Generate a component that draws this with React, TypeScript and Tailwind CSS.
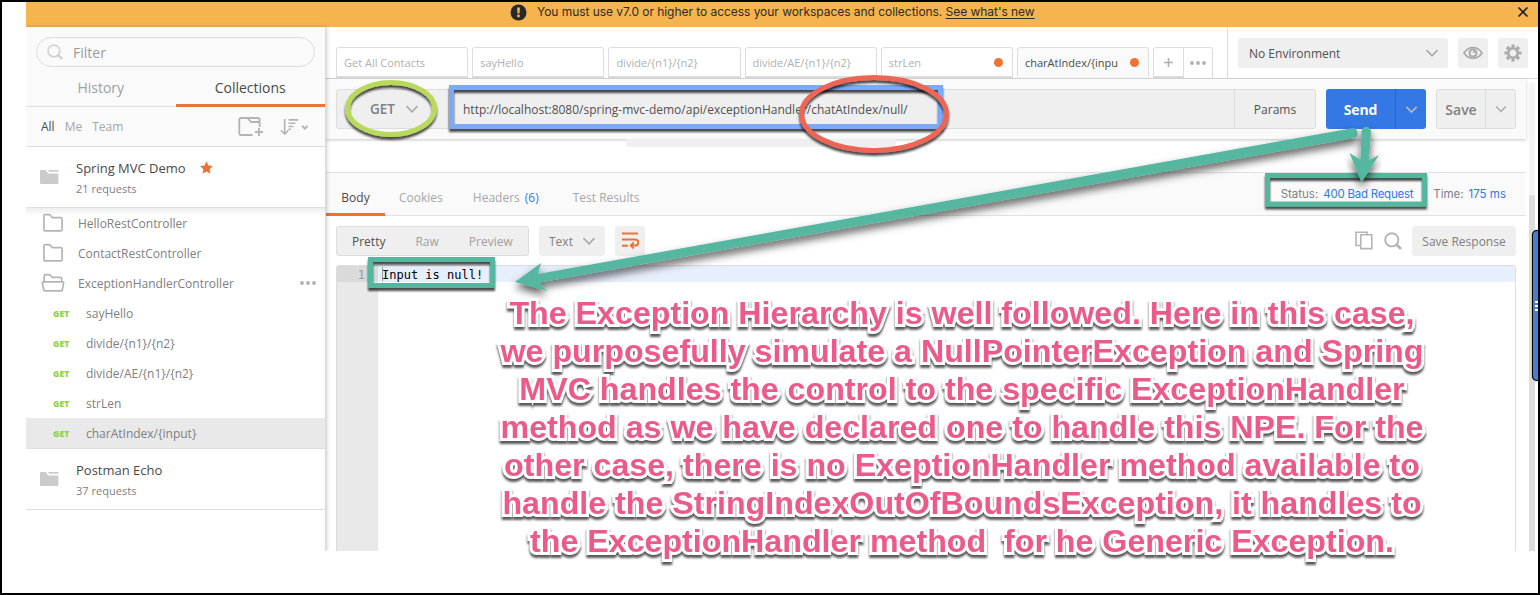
import React from 'react';

const Chevron = ({ className = '', size = 14 }: { className?: string; size?: number }) => (
  <svg width={size} height={size} viewBox="0 0 14 14" fill="none" stroke="currentColor" strokeWidth="1.7" className={`shrink-0 ${className}`}>
    <path d="M1.5 4.2 7 9.8l5.5-5.6" />
  </svg>
);

const SearchIcon = ({ size, className }: { size: number; className: string }) => (
  <svg width={size} height={size} viewBox="0 0 18 18" fill="none" stroke="currentColor" className={`shrink-0 ${className}`}>
    <circle cx="7.8" cy="7.8" r="6.6" strokeWidth="1.9" />
    <path d="m12.6 12.6 4.4 4.3" strokeWidth="2.8" />
  </svg>
);

const Dots = ({ className = '' }: { className?: string }) => (
  <svg width="16" height="4" viewBox="0 0 16 4" fill="currentColor" className={`shrink-0 ${className}`}>
    <circle cx="2" cy="2" r="1.9" />
    <circle cx="8" cy="2" r="1.9" />
    <circle cx="14" cy="2" r="1.9" />
  </svg>
);

const CollectionIcon = () => (
  <svg width="19" height="16" viewBox="0 0 19 16" fill="#cbcbcb" className="shrink-0">
    <path d="M0 2.2Q0 1 1.2 1h4.6l2.4 3.4h10.2V14q0 1-1 1H1q-1 0-1-1z" />
    <path d="M8 1h10.4v1.8H9.2z" />
  </svg>
);

const FolderIcon = () => (
  <svg width="24" height="20" viewBox="0 0 24 20" fill="none" stroke="#b5b5b5" strokeWidth="1.7" strokeLinejoin="round" className="shrink-0">
    <path d="M2.9 16.4V3.2q0-1.5 1.5-1.5h4.1l3 3h8q1.6 0 1.6 1.5v10.3q0 1.4-1.5 1.4H4.4q-1.5 0-1.5-1.5z" />
  </svg>
);

const OpenFolderIcon = () => (
  <svg width="24" height="20" viewBox="0 0 24 20" fill="none" stroke="#b5b5b5" strokeWidth="1.7" strokeLinejoin="round" className="shrink-0">
    <path d="M3.2 8.7V3.2q0-1.5 1.5-1.5h3.8l3 2.6h7.6q1.6 0 1.6 1.5v2.9" />
    <path d="M2.1 8.9h19.8q.8 0 .7.9l-1.2 6.7q-.2 1.3-1.5 1.3H4.100q-1.300 0-1.500-1.300L1.300 9.800q0-.9.8-.9z" />
  </svg>
);

const requests = [
  { name: 'sayHello', active: false },
  { name: 'divide/{n1}/{n2}', active: false },
  { name: 'divide/AE/{n1}/{n2}', active: false },
  { name: 'strLen', active: false },
  { name: 'charAtIndex/{input}', active: true },
];

const tabs = [
  { name: 'Get All Contacts', dirty: false, active: false },
  { name: 'sayHello', dirty: false, active: false },
  { name: 'divide/{n1}/{n2}', dirty: false, active: false },
  { name: 'divide/AE/{n1}/{n2}', dirty: false, active: false },
  { name: 'strLen', dirty: true, active: false },
  { name: 'charAtIndex/{inpu', dirty: true, active: true },
];

const note = [
  'The Exception Hierarchy is well followed. Here in this case,',
  'we purposefully simulate a NullPointerException and Spring',
  'MVC handles the control to the specific ExceptionHandler',
  'method as we have declared one to handle this NPE. For the',
  'other case, there is no ExeptionHandler method available to',
  'handle the StringIndexOutOfBoundsException, it handles to',
  'the ExceptionHandler method  for he Generic Exception.',
];

function Banner() {
  return (
    <header className="flex h-[25px] shrink-0 items-center bg-[#f5b44d] pl-[484px] pr-[9px] font-['Inter',sans-serif] text-[12px] text-[#2b2b2b]">
      <svg width="17" height="17" viewBox="0 0 17 17" className="mb-[5px] shrink-0">
        <circle cx="8.500" cy="8.500" r="8" fill="#282828" />
        <path d="M7.100 3.500h2.800l-.4 6H7.500z" fill="#f5b44d" />
        <circle cx="8.500" cy="12" r="1.400" fill="#f5b44d" />
      </svg>
      <span className="mb-[5px] ml-[10px] whitespace-nowrap tracking-[-0.045px]">
        You must use v7.0 or higher to access your workspaces and collections. <span className="underline underline-offset-2">See what's new</span>
      </span>
      <svg width="12" height="12" viewBox="0 0 12 12" stroke="#222" strokeWidth="1.600" className="mb-[5px] ml-auto shrink-0">
        <path d="m1.500 1.500 9 9m0-9-9 9" />
      </svg>
    </header>
  );
}

function Collection({ name, count, starred }: { name: string; count: string; starred?: boolean }) {
  return (
    <div className="flex h-[61px] shrink-0 items-center border-b border-[#dedede] bg-white pl-[14px]">
      <CollectionIcon />
      <div className="ml-[17px] flex flex-col pt-[4px]">
        <div className="flex h-5 items-center text-[13px] text-[#4a4a4a]">
          {name}
          {starred && (
            <svg width="13" height="13" viewBox="0 0 24 24" fill="#ed7335" className="mb-[3px] ml-[14px]">
              <path d="m12 .5 3.600 7.700 8.200 1.100-6 5.800 1.500 8.400-7.300-4.100-7.300 4.100 1.500-8.400-6-5.800 8.200-1.100z" />
            </svg>
          )}
        </div>
        <div className="flex h-5 items-center text-[11px] tracking-[0.03px] text-[#808080]">{count}</div>
      </div>
    </div>
  );
}

function Sidebar() {
  return (
    <aside className="z-10 flex w-[300px] shrink-0 flex-col border-r border-[#d9d9d9] bg-white shadow-[1px_0_4px_rgba(0,0,0,0.2)]">
      <div className="flex flex-col bg-[#fafafa]">
        <div className="mx-[10px] mt-[10px] flex h-[30px] items-center rounded-full border border-[#dcdcdc] pl-[10px] text-[14px] text-[#9b9b9b]">
          <SearchIcon size={16} className="text-[#d2d2d2]" />
          <span className="ml-[10px]">Filter</span>
        </div>
        <div className="flex h-10 border-b border-[#dedede] text-[14px]">
          <div className="flex flex-1 items-center justify-center pt-[2px] text-[#a0a0a0]">History</div>
          <div className="-mb-px flex flex-1 items-center justify-center border-b-[3px] border-[#ed7335] pt-[3px] text-[#4a4a4a]">Collections</div>
        </div>
        <div className="flex h-10 items-center border-b border-[#dedede] pl-[15px] pr-[17px] text-[12px] text-[#a6a6a6]">
          <span className="text-[#4a4a4a]">All</span>
          <span className="ml-[10px]">Me</span>
          <span className="ml-[10px]">Team</span>
          <svg width="26" height="20" viewBox="0 0 26 20" fill="none" stroke="#b3b3b3" strokeWidth="1.800" strokeLinejoin="round" className="ml-auto">
            <path d="M14.500 18H3q-1.700 0-1.700-1.700V2.600Q1.300 1 3 1h17q1.600 0 1.600 1.600V10" />
            <path d="M9.500 1.200l3.500 3.800h8.500" />
            <path d="M17 15h8m-4-4v8" />
          </svg>
          <svg width="28" height="18" viewBox="0 0 28 18" fill="none" stroke="#b3b3b3" strokeWidth="1.600" className="ml-[16px]">
            <path d="M4.700 1v15M1 12.300l3.700 3.900 3.700-3.900M8.500 1.900h9.700M8.500 5.200h7M8.500 8.500h5M8.500 11.300h2.500" />
            <path d="m22.200 7.900 2.700 2.700 2.700-2.700" strokeWidth="1.900" />
          </svg>
        </div>
      </div>
      <Collection name="Spring MVC Demo" count="21 requests" starred />
      <div className="flex flex-col bg-linear-to-b from-[#eeeeee] to-white to-[8px] text-[12px] text-[#808080]">
        <div className="flex h-[30px] items-center pl-[15px]">
          <FolderIcon />
          <span className="ml-[13px] pt-[2px]">HelloRestController</span>
        </div>
        <div className="flex h-[30px] items-center pl-[15px]">
          <FolderIcon />
          <span className="ml-[13px] pt-[2px]">ContactRestController</span>
        </div>
        <div className="flex h-[30px] items-center pl-[15px] pr-[9px]">
          <OpenFolderIcon />
          <span className="ml-[13px] pt-[2px]">ExceptionHandlerController</span>
          <Dots className="ml-auto text-[#b0b0b0]" />
        </div>
        {requests.map((r) => (
          <div key={r.name} className={`flex h-[30px] items-center pl-[27px] pt-[2px] ${r.active ? 'bg-[#e9e9e9]' : ''}`}>
            <span className="w-[33px] text-[8.500px] font-extrabold tracking-[0.15px] text-[#8fd44a]">GET</span>
            <span>{r.name}</span>
          </div>
        ))}
      </div>
      <div className="h-px bg-[#dedede]" />
      <Collection name="Postman Echo" count="37 requests" />
    </aside>
  );
}

function TabBar() {
  return (
    <div className="flex h-[52px] shrink-0 border-b border-[#d8d8d8] bg-white">
      <div className="flex items-end gap-[4px] pl-[10px]">
        {tabs.map((t) => (
          <div
            key={t.name}
            className={`flex h-[31px] w-[132.200px] items-center rounded-t-[3px] border border-b-2 pl-[7px] pr-[9px] text-[11px] ${
              t.active ? 'border-[#dddddd] border-b-[#fafafa] bg-[#fafafa] text-[#4a4a4a]' : 'border-[#dddddd] bg-white text-[#b0b0b0]'
            }`}
          >
            <span className="pt-[3px]">{t.name}</span>
            {t.dirty && <span className="ml-auto size-[9px] rounded-full bg-[#ed7335]" />}
          </div>
        ))}
        <div className="flex h-[31px] w-[60px] rounded-t-[3px] border border-b-0 border-[#dddddd] text-[#b0b0b0]">
          <div className="flex flex-1 items-center justify-center border-r border-b-2 border-[#dddddd]">
            <svg width="9" height="9" viewBox="0 0 9 9" stroke="currentColor" strokeWidth="1.600">
              <path d="M4.500 0v9M0 4.500h9" />
            </svg>
          </div>
          <div className="flex flex-1 items-center justify-center">
            <Dots />
          </div>
        </div>
      </div>
      <div className="ml-auto flex w-[311px] items-center gap-[10px] border-l border-[#dddddd] pl-[10px]">
        <div className="flex h-[30px] w-[210px] items-center justify-between rounded-[3px] bg-[#efefef] pl-[11px] pr-[9px] text-[12px] text-[#505050]">
          <span className="pt-[2px]">No Environment</span>
          <Chevron className="text-[#aaaaaa]" />
        </div>
        <div className="flex size-[30px] items-center justify-center rounded-[3px] bg-[#efefef]">
          <svg width="20" height="14" viewBox="0 0 20 14" fill="none" stroke="#aaaaaa">
            <path d="M1 7Q4.500 1.700 10 1.700T19 7q-3.500 5.300-9 5.300T1 7z" strokeWidth="1.700" />
            <circle cx="10" cy="7" r="3.500" strokeWidth="2" />
            <circle cx="11" cy="6" r=".7" fill="#aaaaaa" />
          </svg>
        </div>
        <div className="flex size-[30px] items-center justify-center rounded-[3px] bg-[#efefef]">
          <svg width="18" height="18" viewBox="-9 -9 18 18" fill="none" stroke="#aaaaaa">
            <circle r="4.800" strokeWidth="2.600" />
            <g strokeWidth="3.200">
              <path d="M0-5.500v-3M0 5.500v3M-5.500 0h-3M5.500 0h3" />
              <path d="m-4-4-2-2M4-4l2-2M-4 4l-2 2M4 4l2 2" />
            </g>
          </svg>
        </div>
      </div>
    </div>
  );
}

function RequestBar() {
  return (
    <div className="flex h-[60px] w-[1200px] shrink-0 items-center bg-[#fafafa] pl-[10px] pr-[10px] shadow-[0_1px_3px_rgba(0,0,0,0.22)]">
      <div className="flex h-10 w-[980px] rounded-[3px] border border-[#dddddd] bg-[#efefef]">
        <div className="flex w-[112px] items-center border-r border-[#dddddd] pl-[33px] text-[13.500px] font-semibold text-[#808080]">
          <span className="pt-px">GET</span>
          <Chevron className="ml-[10px] text-[#aaaaaa]" />
        </div>
        <div className="flex flex-1 items-center pl-[14px] pt-[2px] text-[12px] text-[#505050]">
          http://localhost:8080/spring-mvc-demo/api/exceptionHandler/chatAtIndex/null/
        </div>
        <div className="flex w-[81px] items-center justify-center border-l border-[#dddddd] pt-[2px] text-[12px] text-[#505050]">Params</div>
      </div>
      <div className="ml-[10px] flex h-10 w-[100px] rounded-[3px] bg-[#3378e5] text-white">
        <div className="flex flex-1 items-center justify-center border-r border-[#2a64c0] text-[14px] font-bold tracking-[-0.1px]">Send</div>
        <div className="flex w-[30px] items-center justify-center">
          <Chevron className="text-[#b9b9b9]" size={13} />
        </div>
      </div>
      <div className="ml-[10px] flex h-10 w-[80px] rounded-[3px] border border-[#dddddd] bg-[#efefef] text-[#808080]">
        <div className="flex flex-1 items-center justify-center border-r border-[#dddddd] text-[14px] font-semibold">Save</div>
        <div className="flex w-[29px] items-center justify-center">
          <Chevron className="text-[#aaaaaa]" size={12} />
        </div>
      </div>
    </div>
  );
}

function Response() {
  return (
    <div className="flex w-[1200px] flex-1 flex-col">
      <div className="flex h-[33px] shrink-0 pl-[300px]">
        <div className="h-[8px] w-[270px] rounded-bl-[3px] bg-[#efefef]" />
      </div>
      <div className="flex h-[44px] shrink-0 border-y border-[#e2e2e2] bg-[#fafafa] text-[12px] text-[#a6a6a6]">
        <div className="-mb-px flex w-[59px] items-center justify-center border-b-[3px] border-[#ed7335] pt-[10px] text-[#4a4a4a]">Body</div>
        <div className="ml-[14px] flex items-center pt-[8px]">Cookies</div>
        <div className="ml-[30px] flex items-center pt-[8px]">
          Headers <span className="ml-[5px] text-[#3378e5]">(6)</span>
        </div>
        <div className="ml-[34px] flex items-center pt-[8px]">Test Results</div>
        <div className="ml-auto flex items-center pr-[20px] pt-[2px] font-['Inter',sans-serif] text-[11.500px] text-[#808080]">
          <span>Status:</span>
          <span className="ml-[5px] tracking-[-0.25px] text-[#3378e5]">400 Bad Request</span>
          <span className="ml-[20px]">Time:</span>
          <span className="ml-[5px] text-[#3378e5]">175 ms</span>
        </div>
      </div>
      <div className="flex h-[49px] shrink-0 items-center px-[10px] text-[12px]">
        <div className="flex h-[30px] w-[193px] items-center rounded-[3px] border border-[#dddddd] bg-[#efefef] pl-[15px] pt-[2px] text-[#a0a0a0]">
          <span className="text-[#505050]">Pretty</span>
          <span className="ml-[30px]">Raw</span>
          <span className="ml-[30px]">Preview</span>
        </div>
        <div className="ml-[10px] flex h-[30px] w-[66px] items-center justify-between rounded-[3px] bg-[#efefef] pl-[10px] pr-[9px] text-[#808080]">
          <span className="pt-[2px]">Text</span>
          <Chevron className="text-[#aaaaaa]" />
        </div>
        <div className="ml-[10px] flex size-[30px] items-center justify-center rounded-[3px] bg-[#efefef]">
          <svg width="18" height="18" viewBox="0 0 18 18" fill="none" stroke="#ed7335" strokeWidth="1.900">
            <path d="M1 1.500h16M1 7.500h13.200q3 0 3 3t-3 3H10M1 13.800h6" />
            <path d="m12.800 10.500-3 3 3 3" />
          </svg>
        </div>
        <svg width="18" height="19" viewBox="0 0 18 19" fill="none" stroke="#b5b5b5" strokeWidth="1.600" className="ml-auto">
          <path d="M5 14.500H1V1.200h11v2.500" />
          <path d="M5.800 3.800h11v13.800h-11z" />
        </svg>
        <SearchIcon size={18} className="ml-[11px] text-[#b5b5b5]" />
        <div className="ml-[10px] flex h-[30px] w-[104px] items-center justify-center rounded-[3px] bg-[#efefef] pt-[2px] text-[#808080]">Save Response</div>
      </div>
      <div className="ml-[10px] flex w-[1180px] flex-1 rounded-t-[3px] border border-b-0 border-[#dddddd] font-['DejaVu_Sans_Mono',monospace] text-[12px]">
        <div className="flex w-[41px] flex-col bg-[#e9e9e9]">
          <div className="flex h-[16px] items-center justify-end bg-[#dadada] pr-[13px] pt-[2px] text-[#999999]">1</div>
        </div>
        <div className="flex flex-1 flex-col bg-white">
          <div className="flex h-[16px] items-center bg-[#e8effc] pl-[4px] text-black">
            <span className="h-[14px] w-px bg-[#999999]" />
            <span className="-ml-px pt-[2px]">Input is null!</span>
          </div>
        </div>
      </div>
    </div>
  );
}

function Annotations() {
  return (
    <>
      <svg className="pointer-events-none absolute -left-[2px] -top-[2px] z-20" width="1540" height="595" viewBox="0 0 1540 595" fill="none">
        <defs>
          <filter id="soft" x="-10%" y="-30%" width="120%" height="180%">
            <feDropShadow dx="0" dy="5" stdDeviation="4" floodColor="#000" floodOpacity=".65" />
          </filter>
          <filter id="hard" x="-10%" y="-20%" width="120%" height="150%">
            <feDropShadow dx="0" dy="3" stdDeviation=".9" floodColor="#000" floodOpacity=".7" />
          </filter>
        </defs>
        <g filter="url(#hard)">
          <ellipse cx="391" cy="108.500" rx="43.500" ry="26" stroke="#b9d95b" strokeWidth="5" />
          <path d="M451.500 87.500h489v39h-489z" stroke="#7baaf7" strokeWidth="5" />
        </g>
        <g filter="url(#hard)">
          <ellipse cx="874" cy="114" rx="72.500" ry="36.500" stroke="#ec6555" strokeWidth="5" />
        </g>
        <g filter="url(#hard)" stroke="#55b7a0" strokeWidth="5">
          <path d="M1267.500 175.500h157v28.500h-157z" />
          <path d="M370.500 259.500h122v26h-122z" />
        </g>
        <g filter="url(#soft)" fill="#55b7a0">
          <path d="M515 282 541 263l-3 11L1352 128.300a5 5 0 0 1 2.200 9.700L539 282.500l8 8.500z" />
        </g>
        <g filter="url(#soft)" fill="#55b7a0">
          <path d="M1361.500 182.500 1349.500 153l11 6.500 1-28a4.700 4.700 0 0 1 9.500 0l-2 28.500 10-5z" />
        </g>
      </svg>
      <div className="absolute left-[460px] top-[292px] z-30 flex w-[1000px] flex-col items-center font-['Liberation_Sans',sans-serif] text-[32.200px] font-bold leading-[38px] text-[#ec5a89] drop-shadow-[0_3px_1px_rgba(0,0,0,0.65)] [-webkit-text-stroke:6px_white] [paint-order:stroke_fill] [stroke-linejoin:round]">
        {note.map((line) => (
          <span key={line} className="whitespace-pre">
            {line}
          </span>
        ))}
      </div>
      <div className="absolute left-[1530px] top-[228px] z-20 flex h-[151px] w-[10px] flex-col items-start justify-center gap-[2px] rounded-l-[5px] border border-black bg-[#3e83cc] pl-[2px] shadow-[0_0_1px_#000]">
        <span className="h-[2px] w-[4px] bg-white" />
        <span className="h-[2px] w-[4px] bg-white" />
        <span className="h-[2px] w-[4px] bg-white" />
      </div>
    </>
  );
}

export default function App() {
  return (
    <div className="relative flex h-[595px] w-[1540px] flex-col overflow-hidden border-2 border-black bg-white font-['Open_Sans',sans-serif]">
      <div className="ml-[24px] flex h-[549px] flex-col overflow-hidden">
        <Banner />
        <div className="flex flex-1">
          <Sidebar />
          <main className="flex flex-1 flex-col">
            <TabBar />
            <div className="flex flex-1">
              <div className="flex w-[1200px] flex-col">
                <RequestBar />
                <Response />
              </div>
              <div className="ml-[3px] mt-[3px] flex w-[6px] flex-col rounded-t-full bg-[#f4f4f4] pt-[113px]">
                <div className="flex-1 rounded-t-full bg-[#dddddd]" />
              </div>
            </div>
          </main>
        </div>
      </div>
      <Annotations />
    </div>
  );
}
